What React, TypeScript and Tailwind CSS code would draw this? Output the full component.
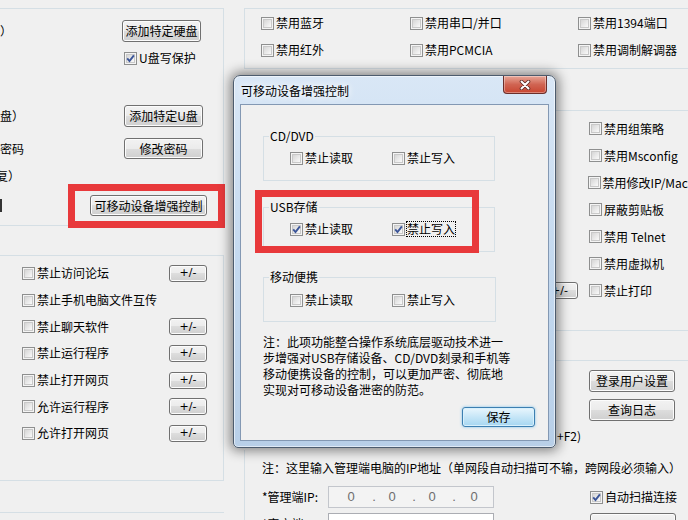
import React from 'react';

const line = 'border-[#d5dfe5]';

function Box({ on }: { on?: boolean }) {
  return (
    <span className="relative inline-flex h-[13px] w-[13px] shrink-0 border border-[#8e8f8f] bg-[#f4f4f4] p-[1px]">
      <span className="h-full w-full border border-[#c9c9c9] bg-gradient-to-br from-[#d6d6d6] to-[#fafafa]" />
      {on && (
        <svg viewBox="0 0 13 13" className="absolute -left-px -top-px h-[13px] w-[13px]">
          <path d="M3.2 6.3 5.5 9 9.9 3.3" fill="none" stroke="#3b5598" strokeWidth="1.9" />
        </svg>
      )}
    </span>
  );
}

function Item({ on, children, className = '', focus }: { on?: boolean; children: React.ReactNode; className?: string; focus?: boolean }) {
  return (
    <span className={`flex items-center gap-[2px] whitespace-nowrap ${className}`}>
      <Box on={on} />
      <span className={focus ? 'outline-1 outline-dotted outline-black' : ''}>{children}</span>
    </span>
  );
}

function Btn({ children, className = '' }: { children?: React.ReactNode; className?: string }) {
  return (
    <div
      className={`flex shrink-0 items-center justify-center whitespace-nowrap rounded-[3px] border border-[#707070] bg-[linear-gradient(#f2f2f2,#ebebeb_50%,#dddddd_50%,#cfcfcf)] shadow-[inset_0_0_0_1px_#fcfcfc] ${className}`}
    >
      {children}
    </div>
  );
}

const leftRows: [string, boolean][] = [
  ['禁止访问论坛', true],
  ['禁止手机电脑文件互传', false],
  ['禁止聊天软件', true],
  ['禁止运行程序', true],
  ['禁止打开网页', true],
  ['允许运行程序', true],
  ['允许打开网页', true],
];

const rightRows = ['禁用组策略', '禁用Msconfig', '禁用修改IP/Mac', '屏蔽剪贴板', '禁用 Telnet', '禁用虚拟机', '禁止打印'];

function Group({ title, children, className = '' }: { title: string; children: React.ReactNode; className?: string }) {
  return (
    <fieldset className={`h-[52px] shrink-0 border border-[#d5dfe5] ${className}`}>
      <legend className="ml-[5px] px-[1px] leading-[14px]">{title}</legend>
      {children}
    </fieldset>
  );
}

function Pair({ on, focus, className = '' }: { on?: boolean; focus?: boolean; className?: string }) {
  return (
    <div className={`flex h-[14px] items-center pl-[26px] ${className}`}>
      <Item on={on} className="w-[102px]">禁止读取</Item>
      <Item on={on} focus={focus}>禁止写入</Item>
    </div>
  );
}

function Dialog() {
  return (
    <div className="absolute left-[233px] top-[75px] flex h-[373px] w-[323px] flex-col rounded-t-[7px] rounded-b-[5px] border border-[#4d5c6e] bg-gradient-to-b from-[#d9e7f6] via-[#c4d9ef] to-[#b8cfe8] shadow-[0_0_12px_3px_rgba(0,0,0,0.45),inset_0_0_0_1px_rgba(255,255,255,0.55)]">
      <div className="flex h-[28px] shrink-0 items-start">
        <span className="pl-[7px] pt-[8px] [text-shadow:0_0_6px_#fff,0_0_10px_#fff]">可移动设备增强控制</span>
        <div className="ml-auto mr-[8px] flex h-[18px] w-[44px] items-center justify-center rounded-b-[4px] border border-t-0 border-[#6b2e2a] bg-gradient-to-b from-[#e7a597] via-[#d06452] to-[#c8442f] shadow-[inset_0_0_0_1px_rgba(255,255,255,0.35)]">
          <svg viewBox="0 0 12 10" className="h-[10px] w-[12px]">
            <path d="M2.5 1.5 9.5 8.5M9.5 1.5 2.5 8.5" stroke="#5a2a24" strokeWidth="3.6" strokeLinecap="round" />
            <path d="M2.5 1.5 9.5 8.5M9.5 1.5 2.5 8.5" stroke="#fff" strokeWidth="2" strokeLinecap="round" />
          </svg>
        </div>
      </div>
      <div className="relative mx-[6px] flex h-[337px] shrink-0 flex-col border border-[#8398b3] bg-[#f0f0f0]">
        <Group title="CD/DVD" className="ml-[22px] mt-[24px] w-[232px]">
          <Pair className="mt-[8px]" />
        </Group>
        <Group title="USB存储" className="ml-[22px] mt-[19px] w-[232px]">
          <Pair on focus className="mt-[8px]" />
        </Group>
        <Group title="移动便携" className="ml-[22px] mt-[18px] w-[233px]">
          <Pair className="mt-[9px]" />
        </Group>
        <div className="ml-[22px] mt-[12px] whitespace-nowrap leading-[16px]">
          注：此项功能整合操作系统底层驱动技术进一
          <br />
          步增强对USB存储设备、CD/DVD刻录和手机等
          <br />
          移动便携设备的控制，可以更加严密、彻底地
          <br />
          实现对可移动设备泄密的防范。
        </div>
        <div className="ml-auto mr-[13px] mt-[9px] flex h-[20px] w-[73px] items-center justify-center rounded-[3px] border border-[#3c7fb1] bg-gradient-to-b from-[#e9f6fd] via-[#c6e6f7] to-[#a5d6f1] shadow-[inset_0_0_0_1px_#d8f0fc,0_0_3px_#7fc2ea]">
          保存
        </div>
        <div className="absolute left-[14px] top-[85px] h-[63px] w-[224px] border-[7px] border-[#e8393b]" />
      </div>
    </div>
  );
}

function IpBox() {
  return (
    <div className="flex h-[22px] w-[166px] items-center border border-[#c3c6cc] bg-[#f3f3f3] pl-[18px] font-['Liberation_Sans',sans-serif] text-[13px] text-[#6e6e6e]">
      <span className="w-[8px] text-center">0</span>
      <span className="ml-[15px] w-[8px] text-center">.</span>
      <span className="ml-[10px] w-[8px] text-center">0</span>
      <span className="ml-[14px] w-[8px] text-center">.</span>
      <span className="ml-[10px] w-[8px] text-center">0</span>
      <span className="ml-[14px] w-[8px] text-center">.</span>
      <span className="ml-[12px] w-[8px] text-center">0</span>
    </div>
  );
}

export default function App() {
  return (
    <div className="relative flex h-[520px] w-[688px] overflow-hidden bg-[#f0f0f0] font-['Noto_Sans_CJK_SC','Liberation_Sans',sans-serif] text-[12px] leading-[14px] text-black">
      {/* left column */}
      <div className="flex w-[224px] shrink-0 flex-col">
        <div className={`relative mt-[8px] flex h-[218px] shrink-0 flex-col border-y border-r ${line}`}>
          <div className="mt-[11px] flex h-[22px] items-center">
            <span className="w-[122px]">）</span>
            <Btn className="h-[22px] w-[79px]">添加特定硬盘</Btn>
          </div>
          <div className="mt-[8px] flex h-[16px] items-center pl-[124px]">
            <Item on>U盘写保护</Item>
          </div>
          <div className="mt-[39px] flex h-[22px] items-center">
            <span className="w-[124px]">盘）</span>
            <Btn className="h-[22px] w-[79px]">添加特定U盘</Btn>
          </div>
          <div className="mt-[11px] flex h-[21px] items-center">
            <span className="w-[124px]">密码</span>
            <Btn className="h-[21px] w-[79px]">修改密码</Btn>
          </div>
          <div className="mt-[10px] flex h-[14px] items-center overflow-hidden">
            <span className="-ml-[4px] whitespace-nowrap">复）</span>
          </div>
          <div className="mt-[12px] flex h-[21px] items-center">
            <span className="h-[13px] w-[90px] border-l-2 border-[#333]" />
            <Btn className="h-[21px] w-[117px]">可移动设备增强控制</Btn>
          </div>
          <div className="absolute left-[68px] top-[175px] h-[44px] w-[157px] border-[7px] border-[#e8393b]" />
        </div>
        <div className={`mt-[29px] flex h-[226px] shrink-0 flex-col border-y border-r pt-[4px] ${line}`}>
          {leftRows.map(([label, btn]) => (
            <div key={label} className="flex h-[26.7px] shrink-0 items-center pl-[22px]">
              <Item className="w-[147px]">{label}</Item>
              {btn && <Btn className="h-[17px] w-[38px] font-['DejaVu_Sans',sans-serif] text-[11px]">+/-</Btn>}
            </div>
          ))}
        </div>
        <div className={`mt-[31px] shrink-0 border-t ${line}`} />
      </div>

      {/* right column */}
      <div className="ml-[20px] flex w-[444px] shrink-0 flex-col">
        <div className={`mt-[8px] h-[61px] shrink-0 border-y border-l pl-[16px] ${line}`}>
          <div className="mt-[7px] flex h-[14px]">
            <Item className="w-[149px]">禁用蓝牙</Item>
            <Item className="w-[168px]">禁用串口/并口</Item>
            <Item>禁用1394端口</Item>
          </div>
          <div className="mt-[13px] flex h-[14px]">
            <Item className="w-[149px]">禁用红外</Item>
            <Item className="w-[168px]">禁用PCMCIA</Item>
            <Item>禁用调制解调器</Item>
          </div>
        </div>
        <div className="flex h-[381px] shrink-0">
          <div className="w-[297px]" />
          <div className="flex w-[147px] flex-col">
            <div className={`mt-[41px] border-t ${line}`} />
            <div className="mt-[4px] flex shrink-0 flex-col">
              {rightRows.map((t, i) => (
                <div key={t} className="flex h-[27px] shrink-0 items-center">
                  <div className="w-[48px]">
                    {i === 6 && <Btn className="h-[17px] w-[37px] font-['DejaVu_Sans',sans-serif] text-[11px]">+/-</Btn>}
                  </div>
                  <Item>{t}</Item>
                </div>
              ))}
            </div>
            <div className={`mt-[26px] border-t ${line}`} />
            <div className={`mt-[29px] border-t ${line}`} />
            <Btn className="ml-[48px] mt-[9px] h-[22px] w-[86px]">登录用户设置</Btn>
            <Btn className="ml-[48px] mt-[7px] h-[22px] w-[86px]">查询日志</Btn>
            <div className="mt-[8px] pl-[16px]">+F2)</div>
          </div>
        </div>
        <div className={`flex h-[120px] shrink-0 flex-col border-l pl-[17px] ${line}`}>
          <div className="mt-[10px] h-[16px] shrink-0 whitespace-nowrap leading-[16px]">
            注：这里输入管理端电脑的IP地址（单网段自动扫描可不输，跨网段必须输入）
          </div>
          <div className="mt-[10px] flex h-[22px] shrink-0 items-center">
            <span className="w-[66px]">*管理端IP:</span>
            <IpBox />
            <Item on className="ml-[96px]">自动扫描连接</Item>
          </div>
          <div className="mt-[5px] flex h-[22px] shrink-0 items-center">
            <span className="w-[66px]">*客户端IP:</span>
            <div className="h-[22px] w-[166px] border border-[#abadb3] bg-white" />
            <Btn className="ml-[96px] h-[22px] w-[86px]" />
          </div>
        </div>
      </div>

      <Dialog />
    </div>
  );
}
